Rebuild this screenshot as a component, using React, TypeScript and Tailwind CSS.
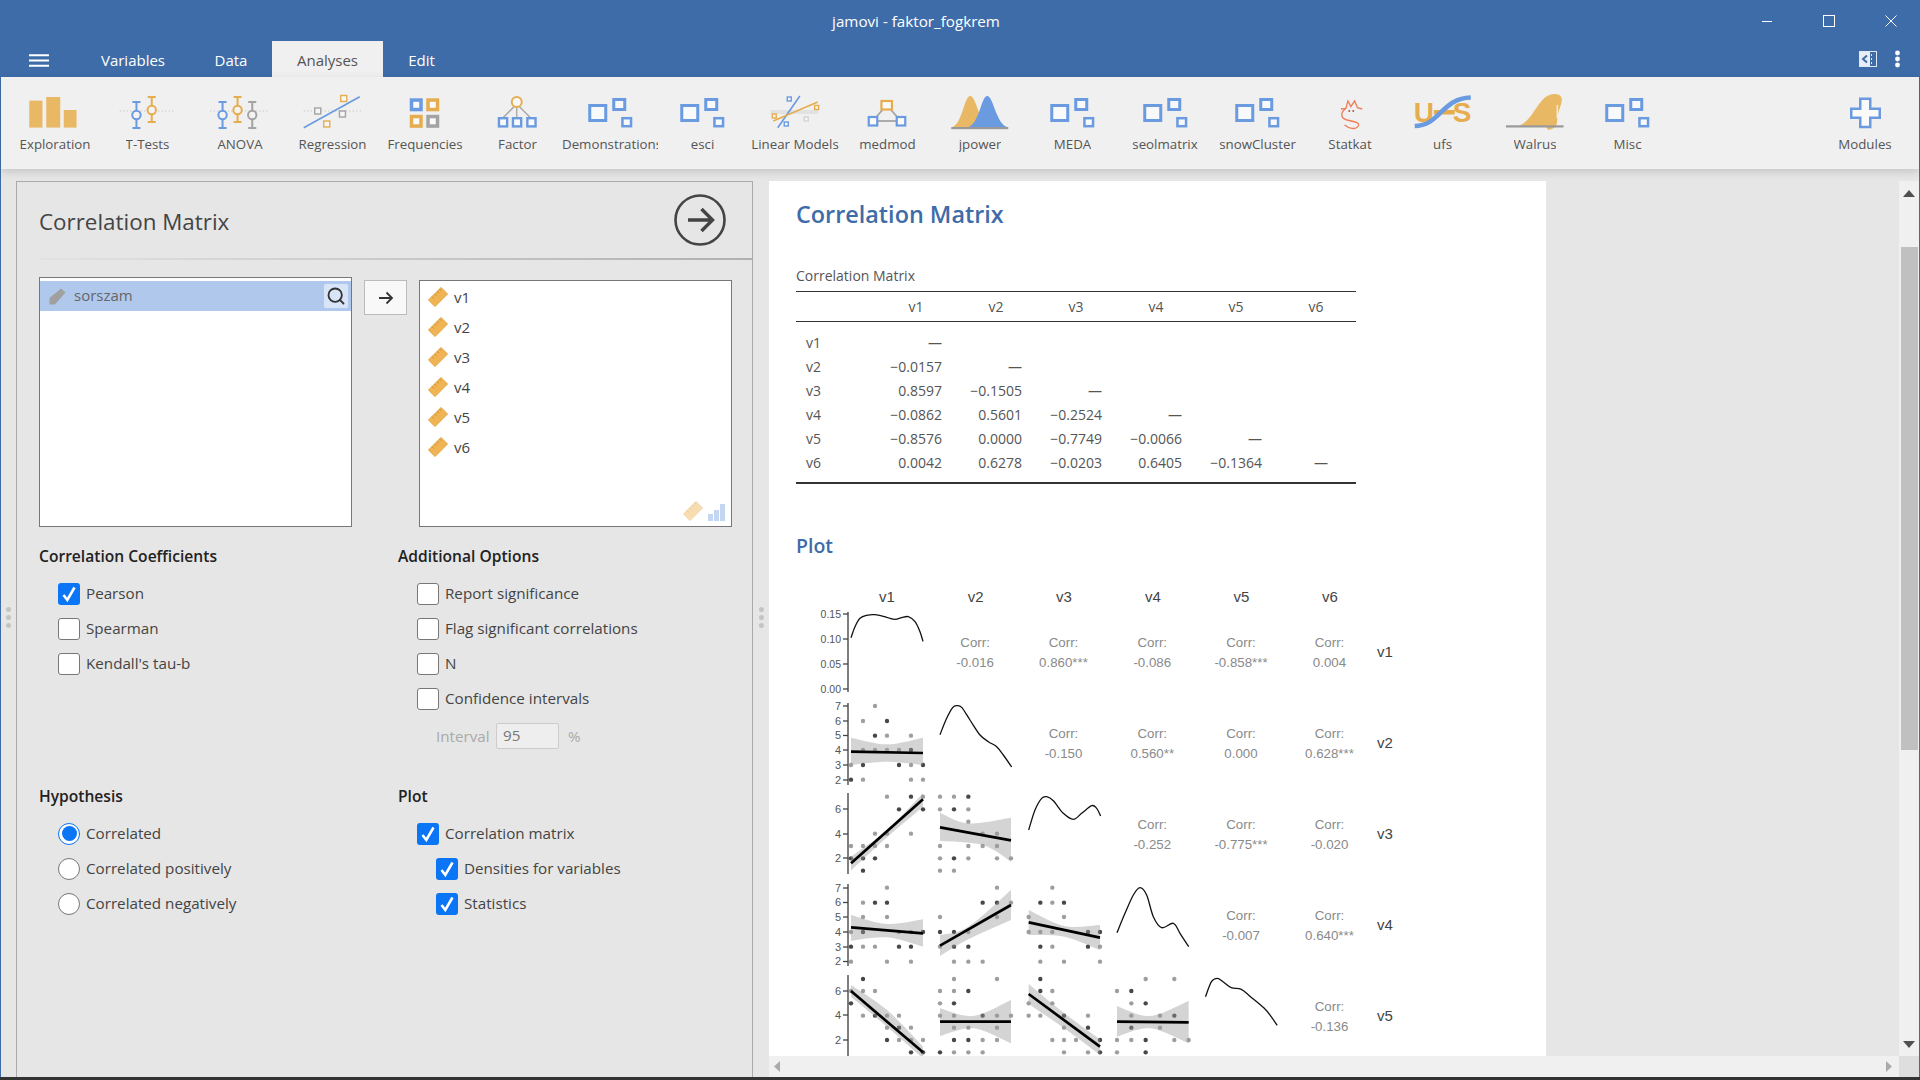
import React from "react";
import { Search } from "lucide-react";

const BLUE = "#6a9ae0";
const OR = "#e6ad4f";
const GR = "#a3a3a3";

type P = [number, number];
const z = (p: P): P => [800 + p[0] / 3, 780 + p[1] / 3];

function smooth(pts: P[]) {
  let d = `M${pts[0][0]} ${pts[0][1]}`;
  for (let i = 0; i < pts.length - 1; i++) {
    const p0 = pts[i - 1] || pts[i];
    const p1 = pts[i];
    const p2 = pts[i + 1];
    const p3 = pts[i + 2] || p2;
    const c1: P = [p1[0] + (p2[0] - p0[0]) / 6, p1[1] + (p2[1] - p0[1]) / 6];
    const c2: P = [p2[0] - (p3[0] - p1[0]) / 6, p2[1] - (p3[1] - p1[1]) / 6];
    d += ` C${c1[0]} ${c1[1]} ${c2[0]} ${c2[1]} ${p2[0]} ${p2[1]}`;
  }
  return d;
}

const Ysc = {
  r2: { 7: -222, 6: -177, 5: -133, 4: -90, 3: -45, 2: -1 } as Record<number, number>,
  r3: { 7: 50, 6: 88, 5: 125, 4: 161, 3: 198, 2: 235, 1: 272 } as Record<number, number>,
  r4: { 7: 323, 6: 368, 5: 411, 4: 456, 3: 500, 2: 545 } as Record<number, number>,
  r5: { 7: 597, 6: 633, 5: 670, 4: 707, 3: 743, 2: 780, 1: 817 } as Record<number, number>,
};

type Panel = {
  y: Record<number, number>;
  dots: Record<number, string>;
  line: [P, P];
  top: [P, P, P];
  bot: [P, P, P];
};

const panels: Panel[] = [
  { y: Ysc.r2, dots: { 7: "225", 6: "189 261d", 5: "225d 261 333", 4: "189 225 261 297 333d", 3: "153 189d 297d 333 369d", 2: "153d 189 333 369" }, line: [[153, -85], [369, -81]], top: [[153, -127], [261, -107], [369, -127]], bot: [[369, -45], [261, -55], [153, -45]] },
  { y: Ysc.r3, dots: { 7: "261 333d 369", 6: "297d 369d", 4: "225 261 333", 3: "153 189 225 261", 2: "153d 189d 225d", 1: "189d" }, line: [[153, 250], [369, 58]], top: [[153, 230], [261, 150], [369, 40]], bot: [[369, 80], [261, 172], [153, 272]] },
  { y: Ysc.r3, dots: { 7: "420 462 505d", 6: "420 462d 505", 5: "505", 4: "548 591", 3: "420 505 548 591", 2: "420 462d 505 591 633", 1: "420 462" }, line: [[420, 142], [633, 181]], top: [[420, 98], [505, 130], [633, 113]], bot: [[633, 245], [548, 195], [420, 183]] },
  { y: Ysc.r4, dots: { 7: "261", 6: "189 225d 261d", 5: "189 261", 4: "153 189d 297 333 369d", 3: "153d 189 225 297d 333d", 2: "153 261 333" }, line: [[153, 442], [369, 460]], top: [[153, 405], [261, 432], [369, 418]], bot: [[369, 500], [261, 472], [153, 482]] },
  { y: Ysc.r4, dots: { 7: "591", 6: "548d 591d 633", 5: "420 591", 4: "420d 462d 505", 3: "420 462d 505d", 2: "462 505 548" }, line: [[420, 497], [633, 375]], top: [[420, 465], [505, 440], [633, 330]], bot: [[633, 420], [505, 478], [420, 528]] },
  { y: Ysc.r4, dots: { 7: "757", 6: "721d 757 792d", 5: "686 792", 4: "686 721 757 864d 900d", 3: "721d 757 864d 900", 2: "721 792 900" }, line: [[686, 427], [900, 473]], top: [[686, 390], [793, 438], [900, 435]], bot: [[900, 510], [793, 470], [686, 465]] },
  { y: Ysc.r5, dots: { 7: "189d", 6: "153 189 225", 5: "153d", 4: "189 225d 261 297", 3: "261 297d 333", 2: "261d 297 333 369", 1: "333d 369d" }, line: [[153, 633], [369, 817]], top: [[153, 615], [261, 690], [369, 800]], bot: [[369, 835], [261, 740], [153, 650]] },
  { y: Ysc.r5, dots: { 7: "462 591", 6: "420 462 505d", 5: "420 462d", 4: "420 462 548d 591 633", 3: "462 505 591", 2: "462d 505d 548 591", 1: "420d 462 505 548" }, line: [[420, 725], [633, 725]], top: [[420, 685], [520, 708], [633, 660]], bot: [[633, 790], [520, 745], [420, 768]] },
  { y: Ysc.r5, dots: { 7: "721d", 6: "721d 757", 5: "686 757", 4: "686 721 792d 864", 3: "792 864d", 2: "757 792 828 900d", 1: "792 864 900d" }, line: [[686, 642], [900, 800]], top: [[686, 612], [793, 700], [900, 778]], bot: [[900, 825], [793, 745], [686, 672]] },
  { y: Ysc.r5, dots: { 7: "1037 1123", 6: "951 994d", 5: "994 1037d", 4: "994 1080 1123d", 3: "994d 1080", 2: "951 994 1037d 1123 1166", 1: "951 1037d" }, line: [[951, 725], [1166, 727]], top: [[951, 678], [1050, 708], [1166, 663]], bot: [[1166, 790], [1050, 745], [951, 770]] },
];

const densities: P[][] = [
  [[153, -427], [165, -460], [180, -485], [200, -494], [225, -496], [260, -488], [285, -482], [305, -487], [325, -490], [345, -475], [360, -445], [369, -416]],
  [[420, -136], [440, -185], [458, -217], [470, -223], [485, -218], [510, -180], [540, -135], [565, -115], [590, -100], [610, -75], [635, -39]],
  [[686, 150], [705, 90], [725, 55], [740, 50], [760, 62], [790, 100], [820, 118], [845, 100], [875, 77], [890, 85], [902, 108]],
  [[951, 458], [975, 400], [1000, 345], [1020, 323], [1040, 345], [1060, 410], [1085, 443], [1120, 430], [1140, 460], [1166, 500]],
];
const density5: P[] = ([[12, 650], [25, 605], [38, 595], [50, 605], [68, 623], [90, 628], [110, 650], [140, 685], [155, 710], [168, 736]] as P[]).map((p) => [1200 + p[0] / 2.178, 780 + p[1] / 3] as P);

const colX = [887, 975.6, 1064, 1152.8, 1241.5, 1330];
const corr: [number, number, string][] = [
  [0, 1, "-0.016"], [0, 2, "0.860***"], [0, 3, "-0.086"], [0, 4, "-0.858***"], [0, 5, "0.004"],
  [1, 2, "-0.150"], [1, 3, "0.560**"], [1, 4, "0.000"], [1, 5, "0.628***"],
  [2, 3, "-0.252"], [2, 4, "-0.775***"], [2, 5, "-0.020"],
  [3, 4, "-0.007"], [3, 5, "0.640***"],
  [4, 5, "-0.136"],
];
const axes: { top: number; bot: number; ticks: [string, number][] }[] = [
  { top: 612, bot: 692, ticks: [["0.15", 614], ["0.10", 639], ["0.05", 664], ["0.00", 689]] },
  { top: 703, bot: 785, ticks: [["7", 706], ["6", 721], ["5", 735.5], ["4", 750], ["3", 765], ["2", 780]] },
  { top: 793, bot: 874, ticks: [["6", 809], ["4", 834], ["2", 858]] },
  { top: 884, bot: 966, ticks: [["7", 888], ["6", 902.5], ["5", 917], ["4", 932], ["3", 947], ["2", 961.5]] },
  { top: 975, bot: 1062, ticks: [["6", 991], ["4", 1015], ["2", 1040]] },
];

function Plot() {
  return (
    <svg className="block -ml-4 w-[660px] h-[490px] shrink-0" viewBox="780 570 660 490" fontFamily="'Liberation Sans', Arial, sans-serif">
      {colX.map((x, i) => (
        <text key={i} x={x} y={602} fontSize={15} fill="#444" textAnchor="middle">{`v${i + 1}`}</text>
      ))}
      {[652, 743, 834, 925, 1016].map((y, i) => (
        <text key={i} x={1385} y={y + 5} fontSize={15} fill="#444" textAnchor="middle">{`v${i + 1}`}</text>
      ))}
      {axes.map((a, i) => (
        <g key={i}>
          <line x1={848} x2={848} y1={a.top} y2={a.bot} stroke="#555" strokeWidth={1.5} />
          {a.ticks.map(([t, y]) => (
            <g key={t}>
              <line x1={843} x2={848} y1={y} y2={y} stroke="#444" strokeWidth={1.3} />
              <text x={841} y={y + 3.8} fontSize={i === 0 ? 10.5 : 11} fill="#555" textAnchor="end">{t}</text>
            </g>
          ))}
        </g>
      ))}
      {panels.map((p, i) => (
        <g key={i}>
          {Object.entries(p.dots).map(([v, s]) =>
            s.split(" ").map((t) => {
              const dark = t.endsWith("d");
              const [x, y] = z([parseFloat(t), p.y[Number(v)]]);
              return <circle key={v + t} cx={x} cy={y} r={2.2} fill="#000" opacity={dark ? 0.72 : 0.38} />;
            })
          )}
          <path d={(() => {
            const top = p.top.map(z);
            const bot = p.bot.map(z);
            return `${smooth(top)} L${bot[0][0]} ${bot[0][1]} ${smooth(bot).replace(/^M[^C]*/, "")} Z`;
          })()} fill="#999" opacity={0.42} />
          <line x1={z(p.line[0])[0]} y1={z(p.line[0])[1]} x2={z(p.line[1])[0]} y2={z(p.line[1])[1]} stroke="#000" strokeWidth={2.7} />
        </g>
      ))}
      {densities.map((d, i) => (
        <path key={i} d={smooth(d.map(z))} fill="none" stroke="#111" strokeWidth={1.3} />
      ))}
      <path d={smooth(density5)} fill="none" stroke="#111" strokeWidth={1.3} />
      {corr.map(([r, c, v]) => (
        <g key={`${r}${c}`} fontSize={13.3} fill="#8a8a8a" textAnchor="middle">
          <text x={colX[c] - 0.5} y={646.5 + r * 91}>Corr:</text>
          <text x={colX[c] - 0.5} y={666.5 + r * 91}>{v}</text>
        </g>
      ))}
    </svg>
  );
}

function DefaultIcon({ c }: { c: number }) {
  return (
    <g fill="#f8f9fb" stroke={BLUE}>
      <rect x={c - 20.5} y={105.5} width={16} height={15} strokeWidth={3} />
      <rect x={c + 3.5} y={99.5} width={11} height={10} strokeWidth={3} />
      <rect x={c + 12.2} y={118.2} width={8.6} height={8} strokeWidth={2.5} />
    </g>
  );
}

function Whisker({ x, top, bot, cy, color }: { x: number; top: number; bot: number; cy: number; color: string }) {
  return (
    <g stroke={color} fill="none" strokeWidth={2}>
      <line x1={x} x2={x} y1={top} y2={bot} />
      <line x1={x - 4} x2={x + 4} y1={top} y2={top} />
      <line x1={x - 4} x2={x + 4} y1={bot} y2={bot} />
      <circle cx={x} cy={cy} r={4.2} fill="#f3f3f3" />
    </g>
  );
}

function Sq({ x, y, s = 6, color }: { x: number; y: number; s?: number; color: string }) {
  return <rect x={x - s / 2} y={y - s / 2} width={s} height={s} fill="#f6f6f6" stroke={color} strokeWidth={1.4} />;
}

function FreqSq({ x, y, color }: { x: number; y: number; color: string }) {
  return <rect x={x + 1.75} y={y + 1.75} width={9.5} height={9.5} fill="#fafafa" stroke={color} strokeWidth={3.5} />;
}

function RibbonIcon({ name, c }: { name: string; c: number }) {
  switch (name) {
    case "Exploration":
      return (
        <g fill="#e9b865">
          <rect x={29} y={100.6} width={13.2} height={27} />
          <rect x={46} y={97} width={14} height={30.6} />
          <rect x={63.5} y={110} width={12.8} height={17.6} />
        </g>
      );
    case "T-Tests":
      return (
        <g>
          <line x1={120} x2={175} y1={111} y2={111} stroke="#bbb" strokeDasharray="1 2.5" />
          <Whisker x={136.7} top={102} bot={128} cy={115} color={BLUE} />
          <Whisker x={152} top={97} bot={122} cy={110} color={OR} />
        </g>
      );
    case "ANOVA":
      return (
        <g>
          <line x1={210} x2={267} y1={111} y2={111} stroke="#bbb" strokeDasharray="1 2.5" />
          <Whisker x={222.3} top={102} bot={128} cy={115} color={BLUE} />
          <Whisker x={237.3} top={97} bot={122} cy={110} color={OR} />
          <Whisker x={252} top={102} bot={128} cy={115} color={GR} />
        </g>
      );
    case "Regression":
      return (
        <g>
          <line x1={304} x2={362} y1={111} y2={111} stroke="#bbb" strokeDasharray="1 2.5" />
          <line x1={304} y1={127.7} x2={360} y2={96.7} stroke={BLUE} strokeWidth={1.6} />
          <Sq x={344} y={98.5} color={OR} />
          <Sq x={318} y={111} color={GR} />
          <Sq x={342.7} y={114} color={GR} />
          <Sq x={327} y={124} color={OR} />
        </g>
      );
    case "Frequencies":
      return (
        <g>
          <FreqSq x={409.5} y={98.3} color={BLUE} />
          <FreqSq x={426} y={98.3} color={OR} />
          <FreqSq x={409.5} y={114.8} color={OR} />
          <FreqSq x={426} y={114.8} color={GR} />
        </g>
      );
    case "Factor":
      return (
        <g>
          <g stroke={GR} strokeWidth={1.3}>
            <line x1={517} x2={503} y1={104} y2={118} />
            <line x1={517} x2={517} y1={104} y2={118} />
            <line x1={517} x2={531} y1={104} y2={118} />
          </g>
          <circle cx={517} cy={102} r={5} fill="#f8f8f8" stroke={OR} strokeWidth={2} />
          <g fill="#fafafa" stroke={BLUE} strokeWidth={2.4}>
            <rect x={499.2} y={118.2} width={8.2} height={8.2} />
            <rect x={513.2} y={118.2} width={8.2} height={8.2} />
            <rect x={527.6} y={118.2} width={8.2} height={8.2} />
          </g>
        </g>
      );
    case "Linear Models":
      return (
        <g>
          <rect x={770} y={110} width={48} height={4} fill="#e2e2e2" />
          <line x1={777.5} y1={127.7} x2={799.6} y2={96} stroke={BLUE} strokeWidth={1.6} />
          <line x1={773} y1={121} x2={817.5} y2={102} stroke={OR} strokeWidth={1.6} />
          <Sq x={789} y={99} s={4} color={BLUE} />
          <Sq x={816.4} y={107.5} s={4} color={OR} />
          <Sq x={774} y={116} s={4} color={OR} />
          <Sq x={786} y={124} s={4} color={BLUE} />
          <Sq x={806} y={119} s={4} color="#d4d4d4" />
        </g>
      );
    case "medmod":
      return (
        <g>
          <g stroke={GR} strokeWidth={1.8}>
            <line x1={887} x2={873} y1={105} y2={121} />
            <line x1={887} x2={901} y1={105} y2={121} />
            <line x1={873} x2={901} y1={121} y2={121} />
          </g>
          <rect x={881.7} y={101} width={10.5} height={8.5} fill="#fafafa" stroke={OR} strokeWidth={2.2} />
          <rect x={869} y={117} width={8.5} height={8.5} fill="#fafafa" stroke={BLUE} strokeWidth={2.2} />
          <rect x={897} y={117} width={8.5} height={8.5} fill="#fafafa" stroke={BLUE} strokeWidth={2.2} />
        </g>
      );
    case "jpower":
      return (
        <g>
          <path d="M952 127 C962 124 964 96 970 96 C976 96 979 124 990 127 Z" fill="#e9b865" />
          <path d="M968 127 C979 124 981 96 987 96 C993 96 996 124 1007 127 Z" fill="#6a9ae0" />
          <rect x={951} y={127} width={57} height={2.2} fill="#999" />
        </g>
      );
    case "Statkat":
      return (
        <g fill="none" stroke="#ee7d58" transform="translate(1300 85) scale(0.3333)">
          <path strokeWidth={4} d="M122 72 L137 70 L143 48 L152 65 L163 48 L172 68 L186 72" />
          <path strokeWidth={4} d="M137 70 C118 85 122 100 140 105 C160 110 180 112 174 123 C166 136 145 130 133 120" />
          <circle cx={147} cy={78} r={3} fill="#a95a45" stroke="none" />
          <circle cx={159} cy={78} r={3} fill="#a95a45" stroke="none" />
        </g>
      );
    case "ufs":
      return (
        <g>
          <g fontFamily="'Liberation Sans', Arial, sans-serif" fontWeight={700} fontSize={28} fill="#e6ad4f">
            <text x={1414} y={122}>U</text>
            <text x={1453} y={122}>S</text>
          </g>
          <rect x={1434} y={110} width={21} height={4.5} fill="#e6ad4f" />
          <path d="M1415 126 C1440 126 1442 98 1471 97.5" fill="none" stroke="#6a9ae0" strokeWidth={4.6} />
        </g>
      );
    case "Walrus":
      return (
        <g>
          <path d="M1518 126 C1530 122 1534 108 1544 98 C1550 93 1559 93 1561 97 C1563 102 1559 108 1558 113 C1556 122 1559 128 1548 130 L1545 126 Z" fill="#e9b865" />
          <line x1={1557} x2={1557} y1={105} y2={118} stroke="#f6f6f6" strokeWidth={1.2} />
          <rect x={1505.7} y={125.3} width={57.6} height={2.2} fill="#999" />
        </g>
      );
    case "Modules":
      return (
        <path d="M1860 98.7 H1870 V108.7 H1879.5 V117.7 H1870 V127 H1860 V117.7 H1851 V108.7 H1860 Z" fill="#fafafa" stroke={BLUE} strokeWidth={2.5} />
      );
    default:
      return <DefaultIcon c={c} />;
  }
}

const items = ["Exploration", "T-Tests", "ANOVA", "Regression", "Frequencies", "Factor", "Demonstrations", "esci", "Linear Models", "medmod", "jpower", "MEDA", "seolmatrix", "snowCluster", "Statkat", "ufs", "Walrus", "Misc"];

function RibbonItem({ name, c }: { name: string; c: number }) {
  return (
    <div className="w-[92.5px] shrink-0 flex flex-col items-center pt-[17px]">
      <svg className="block w-[92.5px] h-[38px]" viewBox={`${c - 46.25} 94 92.5 38`}>
        <RibbonIcon name={name} c={c} />
      </svg>
      <div className="mt-[2px] h-[20px] leading-[20px] text-[13.3px] text-[#555] max-w-[96px] overflow-hidden whitespace-nowrap">{name}</div>
    </div>
  );
}

function Ruler({ className, faded }: { className?: string; faded?: boolean }) {
  return (
    <svg className={className} viewBox="0 0 20 20" opacity={faded ? 0.45 : 1}>
      <path d="M13 0.4 L19.6 7 L7 19.6 L0.4 13 Z" fill="#f0b455" stroke="#dc9d35" strokeWidth={0.8} />
      <path d="M4 9.6 L5.8 11.4 M6.6 7 L8.4 8.8 M9.2 4.4 L11 6.2 M11.6 2 L13.4 3.8" stroke="#c98a28" strokeWidth={0.9} />
    </svg>
  );
}

function Check({ on, label, ml = false }: { on?: boolean; label: string; ml?: boolean }) {
  return (
    <div className={`h-[35px] flex items-center ${ml ? "pl-[38px]" : "pl-[19px]"}`}>
      {on ? (
        <span className="w-[22px] h-[22px] rounded-[3px] bg-[#0a75f5] flex items-center justify-center shrink-0">
          <svg width="16" height="18" viewBox="0 0 16 18"><path d="M2.5 10 L6.3 15 L13.5 2.5" fill="none" stroke="#fff" strokeWidth="2.6" /></svg>
        </span>
      ) : (
        <span className="w-[22px] h-[22px] rounded-[3px] bg-white border border-[#777] shrink-0" />
      )}
      <span className="ml-[6px] text-[15.2px] text-[#444] whitespace-nowrap">{label}</span>
    </div>
  );
}

function Radio({ on, label }: { on?: boolean; label: string }) {
  return (
    <div className="h-[35px] flex items-center pl-[19px]">
      {on ? (
        <span className="w-[22px] h-[22px] rounded-full bg-white border border-[#0a75f5] flex items-center justify-center shrink-0">
          <span className="w-[15px] h-[15px] rounded-full bg-[#0a75f5]" />
        </span>
      ) : (
        <span className="w-[22px] h-[22px] rounded-full bg-white border border-[#777] shrink-0" />
      )}
      <span className="ml-[6px] text-[15.2px] text-[#444] whitespace-nowrap">{label}</span>
    </div>
  );
}

function Heading({ children }: { children: React.ReactNode }) {
  return <div className="h-[20px] leading-[20px] text-[15.6px] font-semibold text-[#222] mb-[10px] whitespace-nowrap">{children}</div>;
}

const rows: string[][] = [
  ["v1", "—", "", "", "", "", ""],
  ["v2", "−0.0157", "—", "", "", "", ""],
  ["v3", "0.8597", "−0.1505", "—", "", "", ""],
  ["v4", "−0.0862", "0.5601", "−0.2524", "—", "", ""],
  ["v5", "−0.8576", "0.0000", "−0.7749", "−0.0066", "—", ""],
  ["v6", "0.0042", "0.6278", "−0.0203", "0.6405", "−0.1364", "—"],
];

function Handle() {
  return (
    <div className="flex flex-col gap-[3px] items-center">
      <span className="w-[5px] h-[5px] rounded-full bg-[#c4c4c4]" />
      <span className="w-[5px] h-[5px] rounded-full bg-[#c4c4c4]" />
      <span className="w-[5px] h-[5px] rounded-full bg-[#c4c4c4]" />
    </div>
  );
}

export default function App() {
  return (
    <div className="w-screen h-screen overflow-hidden flex flex-col bg-[#3e6ca8] font-['Open_Sans','Noto_Sans',sans-serif]">
      {/* title bar */}
      <div className="relative h-[41px] shrink-0 flex items-center justify-end pr-[23px] gap-[50px]">
        <div className="absolute left-0 right-[88px] top-[11px] text-center text-white text-[15.2px] leading-[20px]">jamovi - faktor_fogkrem</div>
        <svg width="12" height="12" viewBox="0 0 12 12"><line x1="1" x2="11" y1="6.5" y2="6.5" stroke="#fff" /></svg>
        <svg width="12" height="12" viewBox="0 0 12 12"><rect x="0.5" y="0.5" width="11" height="11" fill="none" stroke="#fff" /></svg>
        <svg width="12" height="12" viewBox="0 0 12 12"><path d="M0.5 0.5 L11.5 11.5 M11.5 0.5 L0.5 11.5" stroke="#fff" /></svg>
      </div>
      {/* tabs */}
      <div className="h-[36px] shrink-0 flex items-stretch text-white text-[15px]">
        <div className="w-[76px] flex items-center pl-[29px] pt-[3px]">
          <svg width="20" height="13" viewBox="0 0 20 13"><path d="M0 1.2 H20 M0 6.5 H20 M0 11.8 H20" stroke="#fff" strokeWidth="2" /></svg>
        </div>
        <div className="w-[114px] flex items-center justify-center pt-[3px]">Variables</div>
        <div className="w-[82px] flex items-center justify-center pt-[3px]">Data</div>
        <div className="w-[111px] flex items-center justify-center pt-[3px] bg-[#f0f0f0] text-[#555]">Analyses</div>
        <div className="w-[77px] flex items-center justify-center pt-[3px]">Edit</div>
        <div className="ml-auto flex items-center gap-[18px] pr-[20px] -mt-[1px]">
          <svg width="18" height="16" viewBox="0 0 18 16">
            <rect x="0.5" y="0.5" width="17" height="15" fill="#3e6ca8" stroke="#dfe8f5" />
            <rect x="1" y="1" width="10" height="14" fill="#e8eef7" />
            <path d="M8 4.5 L4 8 L8 11.5" fill="none" stroke="#3e6ca8" strokeWidth="2" />
            <path d="M12.5 3 V13" stroke="#dfe8f5" strokeDasharray="2 2" />
          </svg>
          <svg width="5" height="18" viewBox="0 0 5 18">
            <circle cx="2.5" cy="3" r="2.4" fill="#fff" />
            <circle cx="2.5" cy="9" r="2.4" fill="#fff" />
            <circle cx="2.5" cy="15" r="2.4" fill="#fff" />
          </svg>
        </div>
      </div>
      {/* ribbon */}
      <div className="relative z-10 h-[92px] shrink-0 mx-px bg-[#f0f0f0] flex pl-[7.75px] pr-[7.75px] shadow-[0_3px_8px_rgba(0,0,0,0.14)]">
        {items.map((n, i) => (
          <RibbonItem key={n} name={n} c={55 + 92.5 * i} />
        ))}
        <div className="ml-auto">
          <RibbonItem name="Modules" c={1865} />
        </div>
      </div>
      {/* main */}
      <div className="flex-1 min-h-0 mx-px bg-[#e6e6e6] flex pt-[12px]">
        <div className="w-[15px] shrink-0 flex items-center justify-center pb-[34px] pr-[1px] pt-[10px]">
          <Handle />
        </div>
        {/* options panel */}
        <div className="w-[737px] shrink-0 border border-b-0 border-[#aaa] pl-[22px] overflow-hidden">
          <div className="h-[76px] relative flex items-center">
            <div className="text-[22.4px] text-[#444] leading-[30px] pt-[3px]">Correlation Matrix</div>
            <svg className="absolute left-[635px] top-[12px]" width="52" height="52" viewBox="0 0 52 52" fill="none" stroke="#444">
              <circle cx="26" cy="26" r="24.5" strokeWidth="2.6" />
              <path d="M14 26 H38 M27.5 15 L38.5 26 L27.5 37" strokeWidth="3.4" />
            </svg>
          </div>
          <div className="h-[2px] bg-gradient-to-r from-[#e2e2e2] to-[#b0b0b0]" />
          <div className="mt-[17px] flex items-start">
            <div className="w-[313px] h-[250px] bg-white border border-[#777] pt-[3px] shrink-0">
              <div className="h-[30px] bg-[#b0c8ec] flex items-center pl-[9px] pr-[3px]">
                <svg width="17" height="17" viewBox="0 0 17 17"><path d="M12 0.5 L16.5 4.5 L6 16.5 L0.5 16.5 L0.5 10 Z" fill="#a0a0a0" /></svg>
                <span className="ml-[8px] text-[15px] text-[#666] pb-[2px]">sorszam</span>
                <span className="ml-auto w-[24px] h-[24px] rounded-[2px] bg-[#d8e5f8] flex items-center justify-center">
                  <Search size={20} strokeWidth={2.2} color="#333" />
                </span>
              </div>
            </div>
            <div className="ml-[12px] mt-[3px] w-[43px] h-[35px] bg-[#f8f8f8] border border-[#bbb] flex items-center justify-center shrink-0">
              <svg width="16" height="14" viewBox="0 0 16 14"><path d="M1 7 H14 M8.5 1.5 L14 7 L8.5 12.5" fill="none" stroke="#333" strokeWidth="1.8" /></svg>
            </div>
            <div className="ml-[12px] mt-[3px] relative w-[313px] h-[247px] bg-white border border-[#777] shrink-0 pt-[1px]">
              {[1, 2, 3, 4, 5, 6].map((n) => (
                <div key={n} className="h-[30px] flex items-center pl-[8px]">
                  <Ruler className="w-[20px] h-[20px]" />
                  <span className="ml-[6px] text-[15px] text-[#444]">{`v${n}`}</span>
                </div>
              ))}
              <div className="absolute right-[6px] bottom-[5px] flex items-end gap-[4px]">
                <Ruler className="w-[20px] h-[20px]" faded />
                <svg width="18" height="18" viewBox="0 0 18 18" opacity="0.4"><path d="M1 11 H6 V18 H1 Z M7 7 H12 V18 H7 Z M13 1 H18 V18 H13 Z" fill="#6a9ae0" /></svg>
              </div>
            </div>
          </div>
          <div className="mt-[19px] grid grid-cols-[359px_1fr]">
            <div>
              <Heading>Correlation Coefficients</Heading>
              <Check on label="Pearson" />
              <Check label="Spearman" />
              <Check label="Kendall's tau-b" />
            </div>
            <div>
              <Heading>Additional Options</Heading>
              <Check label="Report significance" />
              <Check label="Flag significant correlations" />
              <Check label="N" />
              <Check label="Confidence intervals" />
              <div className="mt-[7px] h-[26px] flex items-center pl-[38px] text-[15.2px] text-[#aaa]">
                <span className="w-[60px]">Interval</span>
                <span className="w-[63px] h-[26px] bg-[#eeeeee] border border-[#ccc] rounded-[2px] pl-[6px] leading-[22px] text-[#777]">95</span>
                <span className="ml-[9px]">%</span>
              </div>
            </div>
          </div>
          <div className="mt-[37px] grid grid-cols-[359px_1fr]">
            <div>
              <Heading>Hypothesis</Heading>
              <Radio on label="Correlated" />
              <Radio label="Correlated positively" />
              <Radio label="Correlated negatively" />
            </div>
            <div>
              <Heading>Plot</Heading>
              <Check on label="Correlation matrix" />
              <Check on ml label="Densities for variables" />
              <Check on ml label="Statistics" />
            </div>
          </div>
        </div>
        <div className="w-[16px] shrink-0 flex items-center justify-center pb-[34px] pt-[10px]">
          <Handle />
        </div>
        {/* results */}
        <div className="flex-1 min-w-0 flex flex-col">
          <div className="flex-1 min-h-0 flex">
            <div className="w-[777px] shrink-0 bg-white pl-[27px] overflow-hidden flex flex-col">
              <div className="mt-[17px] h-[32px] leading-[32px] text-[23.4px] font-semibold text-[#3e6ca8] whitespace-nowrap">Correlation Matrix</div>
              <div className="mt-[36px] h-[20px] leading-[20px] text-[14px] text-[#555]">Correlation Matrix</div>
              <table className="mt-[5px] w-[560px] table-fixed border-collapse border-t border-b-2 border-[#333] text-[14px] text-[#555] shrink-0">
                <thead>
                  <tr className="h-[30px] border-b border-[#333]">
                    <th className="w-[80px]" />
                    {[1, 2, 3, 4, 5, 6].map((n) => (
                      <th key={n} className="w-[80px] font-normal text-center">{`v${n}`}</th>
                    ))}
                  </tr>
                </thead>
                <tbody>
                  <tr className="h-[9px]"><td colSpan={7} /></tr>
                  {rows.map((r, i) => (
                    <tr key={i} className="h-[24px]">
                      {r.map((c, j) => (
                        <td key={j} className={j === 0 ? "pl-[10px]" : j === 6 ? "text-right pr-[28px]" : "text-right pr-[14px]"}>{c}</td>
                      ))}
                    </tr>
                  ))}
                  <tr className="h-[8px]"><td colSpan={7} /></tr>
                </tbody>
              </table>
              <div className="mt-[48px] h-[28px] leading-[28px] text-[19.5px] font-semibold text-[#3e6ca8] shrink-0">Plot</div>
              <div className="mt-[10px]">
                <Plot />
              </div>
            </div>
            <div className="flex-1" />
            <div className="relative w-[20px] shrink-0 bg-[#f0f0f0] flex flex-col items-center pt-[9px]">
              <svg width="12" height="7" viewBox="0 0 12 7"><path d="M6 0 L12 7 H0 Z" fill="#505050" /></svg>
              <div className="mt-[50px] w-[17px] h-[503px] bg-[#c0c0c0]" />
              <svg className="mt-auto mb-[8px]" width="12" height="7" viewBox="0 0 12 7"><path d="M0 0 H12 L6 7 Z" fill="#505050" /></svg>
            </div>
          </div>
          <div className="h-[21px] shrink-0 flex bg-[#f0f0f0]">
            <div className="flex-1 flex items-center justify-between pl-[5px] pr-[7px]">
              <svg width="6" height="11" viewBox="0 0 6 11"><path d="M6 0 V11 L0 5.5 Z" fill="#aaa" /></svg>
              <svg width="6" height="11" viewBox="0 0 6 11"><path d="M0 0 V11 L6 5.5 Z" fill="#aaa" /></svg>
            </div>
            <div className="w-[20px] bg-[#dedede]" />
          </div>
        </div>
      </div>
      <div className="h-[3px] shrink-0 bg-[#333]" />
    </div>
  );
}
